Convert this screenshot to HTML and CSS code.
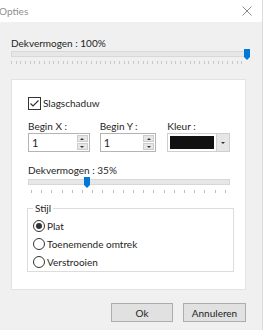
FILE: index.html
```html
<!DOCTYPE html>
<html lang="nl">
<head>
  <meta charset="UTF-8" />
  <title>Opties</title>
  <link rel="stylesheet" href="styles.css">
</head>
<body>

<div class="titlebar">
  <span class="title">Opties</span>
  <svg class="close" viewBox="0 0 10 10"><path d="M0.5 0.5L9.5 9.5M9.5 0.5L0.5 9.5" stroke="#8a8a8a" stroke-width="1" fill="none"/></svg>
</div>

<div class="content">
  <div class="label">Dekvermogen : 100%</div>
  <div class="slider">
    <div class="track">
      <svg class="thumb" style="left:232px" viewBox="0 0 6 11"><path d="M0 0H6V8L3 11L0 8Z" fill="#0078d7"/></svg>
    </div>
    <div class="ticks fine"></div>
  </div>

  <div class="panel">
    <div class="check">
      <svg class="box" viewBox="0 0 13 13"><rect x="0.5" y="0.5" width="12" height="12" fill="#fff" stroke="#333"/><path d="M2.5 6.5L5 9L10.5 3.5" stroke="#333" stroke-width="1.2" fill="none"/></svg>
      <span>Slagschaduw</span>
    </div>

    <div class="fields">
      <div class="field fx">
        <div class="flabel">Begin X :</div>
        <div class="spin"><span class="val">1</span><div class="arrows"><span class="up"></span><span class="down"></span></div></div>
      </div>
      <div class="field fy">
        <div class="flabel">Begin Y :</div>
        <div class="spin"><span class="val">1</span><div class="arrows"><span class="up"></span><span class="down"></span></div></div>
      </div>
      <div class="field fc">
        <div class="flabel">Kleur :</div>
        <div class="combo"><span class="swatch"></span><span class="drop down"></span></div>
      </div>
    </div>

    <div class="label label2">Dekvermogen : 35%</div>
    <div class="slider slider2">
      <div class="track">
        <svg class="thumb" style="left:55px" viewBox="0 0 6 11"><path d="M0 0H6V8L3 11L0 8Z" fill="#0078d7"/></svg>
      </div>
      <div class="ticks coarse"></div>
    </div>

    <fieldset class="group">
      <legend>Stijl</legend>
      <div class="radio"><span class="dot on"></span>Plat</div>
      <div class="radio"><span class="dot"></span>Toenemende omtrek</div>
      <div class="radio"><span class="dot"></span>Verstrooien</div>
    </fieldset>
  </div>

  <div class="buttons">
    <button class="btn ok">Ok</button>
    <button class="btn cancel">Annuleren</button>
  </div>
</div>

</body>
</html>
```

FILE: styles.css
```css
* {
  box-sizing: border-box;
}
body {
  margin: 0;
  width: 263px;
  height: 330px;
  overflow: hidden;
  background: #f0f0f0;
  font-family: Lato, "Noto Sans", sans-serif;
  font-size: 10px;
  color: #1e1e1e;
  border-right: 1px solid #dadada;
}
.titlebar {
  height: 22px;
  background: #fff;
  display: flex;
  align-items: center;
  justify-content: space-between;
  padding-right: 10px;
}
.title {
  color: #8f8f8f;
  margin-left: -1px;
}
.close {
  width: 10px;
  height: 10px;
}
.content {
  padding: 13px 16px 0 11px;
}
.label {
  line-height: 16px;
}
.slider {
  height: 14px;
}
.track {
  position: relative;
  height: 6px;
  background: #e7e7e7;
  border: 1px solid #d8d8d8;
}
.thumb {
  position: absolute;
  top: -3px;
  width: 6px;
  height: 11px;
}
.ticks {
  margin-top: 4px;
  height: 3px;
}
.ticks.fine {
  background: repeating-linear-gradient(to right, #c8c8c8 0 1px, transparent 1px 4.7px);
}
.ticks.coarse {
  margin: 5px 0 0 3px;
  width: 200px;
  background: repeating-linear-gradient(to right, #bcbcbc 0 1px, transparent 1px 10.2px);
}
.panel {
  margin-top: 14px;
  background: #fff;
  border: 1px solid #e2e2e2;
  padding: 15px 15px 17px 16px;
}
.check {
  display: flex;
  align-items: center;
  height: 16px;
  gap: 2px;
}
.box {
  width: 13px;
  height: 13px;
}
.fields {
  display: flex;
  margin-top: 8px;
}
.flabel {
  line-height: 14px;
}
.fx { width: 62px; }
.fy { width: 57px; margin-left: 10px; }
.fc { width: 63px; margin-left: 11px; }
.spin {
  display: flex;
  height: 19px;
  border: 1px solid #b4b4b4;
  background: #fff;
}
.val {
  flex: 1;
  padding-left: 3px;
  line-height: 17px;
  font-size: 11px;
}
.arrows {
  width: 11px;
  margin: 1px 1px 1px 0;
  display: flex;
  flex-direction: column;
  gap: 1px;
}
.arrows span {
  flex: 1;
  background: #e6e6e6;
  border: 1px solid #cdcdcd;
  display: flex;
  align-items: center;
  justify-content: center;
}
.up::after, .down::after {
  content: "";
  border-left: 2px solid transparent;
  border-right: 2px solid transparent;
}
.up::after {
  border-bottom: 2px solid #333;
}
.down::after {
  border-top: 2px solid #333;
}
.combo {
  display: flex;
  height: 19px;
  border: 1px solid #cfcfcf;
  background: #fff;
}
.swatch {
  width: 44px;
  margin: 2px;
  background: #111;
}
.drop {
  flex: 1;
  background: #e6e6e6;
  border-left: 1px solid #cfcfcf;
  display: flex;
  align-items: center;
  justify-content: center;
}
.label2 {
  margin-top: 10px;
}
.slider2 {
  height: 16px;
  padding-top: 1px;
}
.group {
  margin: 6px 0 0 -1px;
  padding: 1px 0 0 5px;
  border: 1px solid #dcdcdc;
  width: 207px;
}
.group legend {
  padding: 0 2px;
  line-height: 16px;
}
.radio {
  display: flex;
  align-items: center;
  height: 18px;
  gap: 2px;
}
.dot {
  width: 12px;
  height: 12px;
  border: 1px solid #333;
  border-radius: 50%;
  display: flex;
  align-items: center;
  justify-content: center;
}
.dot.on::after {
  content: "";
  width: 6px;
  height: 6px;
  border-radius: 50%;
  background: #333;
}
.buttons {
  display: flex;
  justify-content: flex-end;
  gap: 10px;
  margin-top: 13px;
}
.btn {
  height: 19px;
  background: #e1e1e1;
  border: 1px solid #adadad;
  font-family: inherit;
  font-size: 10px;
  color: #1e1e1e;
  padding: 0;
}
.ok { width: 62px; }
.cancel { width: 63px; }
```
